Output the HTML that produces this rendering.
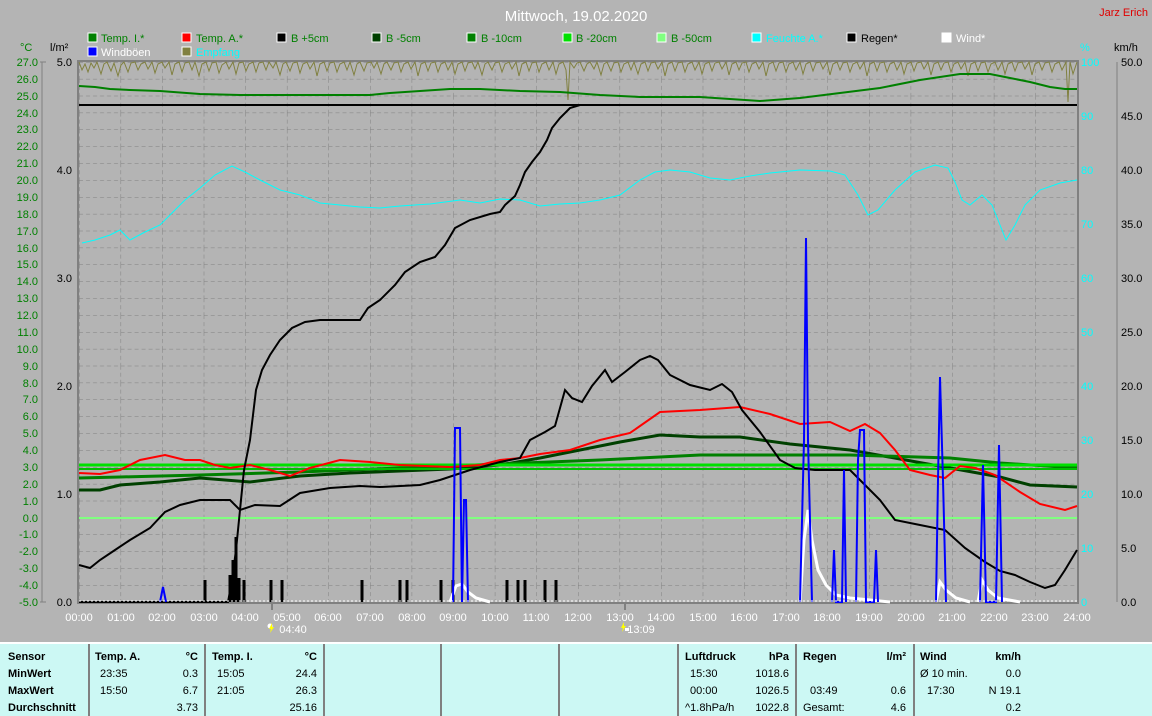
<!DOCTYPE html>
<html><head><meta charset="utf-8"><style>
body{margin:0;width:1152px;height:714px;overflow:hidden;background:#b4b4b4;font-family:"Liberation Sans",sans-serif;}
svg{position:absolute;left:0;top:0}
.tb{position:absolute;left:0;top:642px;width:1152px;height:72px;background:#ccf8f4;border-top:2px solid #fff;}
.tb div{position:absolute;font-size:11px;color:#000;white-space:nowrap}
.b{font-weight:bold}
.r{text-align:right}
.sep{position:absolute;top:0;width:2px;height:72px;background:#808080!important}
</style></head><body>
<svg width="1152" height="714" font-family="Liberation Sans, sans-serif">
<defs>
<pattern id="g" x="79" y="62" width="41.583" height="16.875" patternUnits="userSpaceOnUse">
<line x1="0" y1="0" x2="41.583" y2="0" stroke="#808080" stroke-dasharray="4,3"/>
<line x1="0" y1="0" x2="0" y2="16.875" stroke="#808080" stroke-dasharray="4,3"/>
</pattern>
</defs>
<text x="576" y="21" fill="#fff" font-size="15" text-anchor="middle">Mittwoch, 19.02.2020</text>
<text x="1148" y="16" fill="#e00000" font-size="11" text-anchor="end">Jarz Erich</text>
<g font-size="11">
<rect x="88" y="33" width="9" height="9" fill="#008000" stroke="#fff"/><text x="101" y="42" fill="#008000">Temp. I.*</text>
<rect x="182" y="33" width="9" height="9" fill="#ff0000" stroke="#fff"/><text x="196" y="42" fill="#008000">Temp. A.*</text>
<rect x="277" y="33" width="9" height="9" fill="#000" stroke="#fff"/><text x="291" y="42" fill="#008000">B +5cm</text>
<rect x="372" y="33" width="9" height="9" fill="#004000" stroke="#fff"/><text x="386" y="42" fill="#008000">B -5cm</text>
<rect x="467" y="33" width="9" height="9" fill="#008000" stroke="#fff"/><text x="481" y="42" fill="#008000">B -10cm</text>
<rect x="563" y="33" width="9" height="9" fill="#00e000" stroke="#fff"/><text x="576" y="42" fill="#008000">B -20cm</text>
<rect x="657" y="33" width="9" height="9" fill="#80ff80" stroke="#fff"/><text x="671" y="42" fill="#008000">B -50cm</text>
<rect x="752" y="33" width="9" height="9" fill="#00ffff" stroke="#fff"/><text x="766" y="42" fill="#00ffff">Feuchte A.*</text>
<rect x="847" y="33" width="9" height="9" fill="#000" stroke="#fff"/><text x="861" y="42" fill="#000">Regen*</text>
<rect x="942" y="33" width="9" height="9" fill="#fff" stroke="#fff"/><text x="956" y="42" fill="#fff">Wind*</text>
<rect x="88" y="47" width="9" height="9" fill="#0000ff" stroke="#fff"/><text x="101" y="56" fill="#fff">Windböen</text>
<rect x="182" y="47" width="9" height="9" fill="#808040" stroke="#fff"/><text x="196" y="56" fill="#00ffff">Empfang</text>
<text x="20" y="51" fill="#008000">°C</text>
<text x="50" y="51" fill="#000">l/m²</text>
<text x="1080" y="51" fill="#00ffff">%</text>
<text x="1114" y="51" fill="#000">km/h</text>
</g>
<g font-size="11" fill="#008000" text-anchor="end">
<text x="38" y="66">27.0</text><text x="38" y="83">26.0</text><text x="38" y="100">25.0</text><text x="38" y="117">24.0</text><text x="38" y="133">23.0</text><text x="38" y="150">22.0</text><text x="38" y="167">21.0</text><text x="38" y="184">20.0</text><text x="38" y="201">19.0</text><text x="38" y="218">18.0</text><text x="38" y="235">17.0</text><text x="38" y="252">16.0</text><text x="38" y="268">15.0</text><text x="38" y="285">14.0</text><text x="38" y="302">13.0</text><text x="38" y="319">12.0</text><text x="38" y="336">11.0</text><text x="38" y="353">10.0</text><text x="38" y="370">9.0</text><text x="38" y="387">8.0</text><text x="38" y="403">7.0</text><text x="38" y="420">6.0</text><text x="38" y="437">5.0</text><text x="38" y="454">4.0</text><text x="38" y="471">3.0</text><text x="38" y="488">2.0</text><text x="38" y="505">1.0</text><text x="38" y="522">0.0</text><text x="38" y="538">-1.0</text><text x="38" y="555">-2.0</text><text x="38" y="572">-3.0</text><text x="38" y="589">-4.0</text><text x="38" y="606">-5.0</text>
</g>
<line x1="42" y1="62" x2="42" y2="602" stroke="#808080"/>
<g stroke="#808080"><line x1="40" y1="62" x2="46" y2="62"/><line x1="40" y1="602" x2="46" y2="602"/></g>
<g font-size="11" fill="#000" text-anchor="end">
<text x="72" y="66">5.0</text><text x="72" y="174">4.0</text><text x="72" y="282">3.0</text><text x="72" y="390">2.0</text><text x="72" y="498">1.0</text><text x="72" y="606">0.0</text>
</g>
<g font-size="11" fill="#00ffff">
<text x="1081" y="66">100</text><text x="1081" y="120">90</text><text x="1081" y="174">80</text><text x="1081" y="228">70</text><text x="1081" y="282">60</text><text x="1081" y="336">50</text><text x="1081" y="390">40</text><text x="1081" y="444">30</text><text x="1081" y="498">20</text><text x="1081" y="552">10</text><text x="1081" y="606">0</text>
</g>
<line x1="1117" y1="62" x2="1117" y2="602" stroke="#808080"/>
<g font-size="11" fill="#000">
<text x="1121" y="66">50.0</text><text x="1121" y="120">45.0</text><text x="1121" y="174">40.0</text><text x="1121" y="228">35.0</text><text x="1121" y="282">30.0</text><text x="1121" y="336">25.0</text><text x="1121" y="390">20.0</text><text x="1121" y="444">15.0</text><text x="1121" y="498">10.0</text><text x="1121" y="552">5.0</text><text x="1121" y="606">0.0</text>
</g>
<rect x="79" y="62" width="998" height="540" fill="url(#g)"/>
<rect x="78" y="61" width="1000" height="542" fill="none" stroke="#808080" stroke-width="2"/>
<polyline fill="none" stroke="#808040" stroke-width="1" points="79,62 82,70 85,64 88,72 91,63 94,68 97,62 101,74 104,64 107,62 111,71 114,63 118,76 121,65 124,62 128,72 131,63 135,62 138,70 141,64 145,62 148,69 152,62 155,73 158,64 162,62 165,68 169,62 172,75 175,64 179,62 182,72 185,63 189,62 192,70 195,62 199,76 202,64 206,62 209,71 212,63 216,62 219,73 222,65 226,62 229,69 233,62 236,74 239,63 243,62 246,71 249,64 253,62 256,72 259,63 263,62 266,70 269,62 273,68 276,62 280,75 283,64 286,62 290,71 293,63 297,62 300,73 303,64 307,62 310,69 314,62 317,76 320,64 324,62 327,71 330,63 334,62 337,72 340,64 344,62 347,70 350,62 354,75 357,64 360,62 364,71 367,63 371,62 374,68 377,62 381,74 384,64 387,62 391,70 394,63 398,62 401,72 404,64 408,62 411,69 415,62 418,76 421,64 425,62 428,71 431,63 435,62 438,72 441,64 445,62 448,70 452,62 455,74 458,64 462,62 465,71 468,63 472,62 475,69 478,62 482,75 485,64 488,62 492,70 495,63 499,62 502,72 505,64 509,62 512,69 516,62 519,76 522,64 526,62 529,71 532,63 536,62 539,72 542,64 546,62 549,70 553,62 556,74 559,64 563,62 566,70 568,100 570,62 574,68 577,63 580,62 584,71 587,64 590,62 594,69 597,62 601,75 604,64 607,62 611,71 614,63 618,62 621,72 624,64 628,62 631,70 634,62 638,74 641,64 645,62 648,71 651,63 655,62 658,69 662,62 665,76 668,64 672,62 675,71 678,63 682,62 685,72 688,64 692,62 695,70 699,62 702,74 705,64 709,62 712,71 715,63 719,62 722,69 726,62 729,75 732,64 736,62 739,70 742,63 746,62 749,72 752,64 756,62 759,69 763,62 766,76 769,64 773,62 776,71 779,63 783,62 786,72 789,64 793,62 796,70 800,62 803,74 806,64 810,62 813,71 816,63 820,62 823,69 827,62 830,75 833,64 837,62 840,70 843,63 847,62 850,72 853,64 857,62 860,69 864,62 867,76 870,64 874,62 877,71 880,63 884,62 887,72 890,64 894,62 897,70 901,62 904,74 907,64 911,62 914,71 917,63 921,62 924,69 928,62 931,75 934,64 938,62 941,70 944,63 948,62 951,72 954,64 958,62 961,69 965,62 968,76 971,64 975,62 978,71 981,63 985,62 988,72 991,64 995,62 998,70 1002,62 1005,74 1008,64 1012,62 1015,71 1018,63 1022,62 1025,69 1029,62 1032,75 1035,64 1039,62 1042,70 1045,63 1049,62 1052,72 1055,64 1059,62 1062,70 1066,62 1068,102 1070,62 1073,74 1077,62"/>
<polyline fill="none" stroke="#008000" stroke-width="2" points="79,86 95,87 110,89 130,90 160,91 200,94 240,95 300,95 370,95 390,93 420,91 450,89 480,89 520,91 560,92 600,95 640,97 700,97 760,101 800,98 840,93 880,88 920,80 960,74 990,74 1010,78 1030,82 1050,87 1065,89 1077,89"/>
<polyline fill="none" stroke="#000" stroke-width="2" points="79,105 1077,105"/>
<line x1="79" y1="518" x2="1077" y2="518" stroke="#80ff80" stroke-width="2"/>
<polyline fill="none" stroke="#00ffff" stroke-width="1" points="82,243 95,240 110,235 120,230 130,240 145,232 160,225 175,210 185,200 200,188 215,175 232,166 245,172 260,180 280,190 300,195 320,203 340,205 360,207 380,208 400,206 430,204 460,200 480,203 500,199 520,200 540,206 560,204 580,203 600,200 620,195 640,180 655,172 670,170 690,172 710,178 730,180 750,176 770,173 800,170 830,171 845,175 858,195 868,215 878,210 895,190 915,172 935,165 948,168 955,182 962,200 970,205 982,195 992,205 1000,225 1006,240 1015,225 1025,205 1040,190 1060,183 1077,180"/>
<polyline fill="none" stroke="#004000" stroke-width="3" points="79,490 100,490 120,485 160,482 200,478 250,482 300,476 350,473 400,471 450,469 500,465 540,458 580,450 620,442 660,435 700,437 740,437 790,444 850,450 900,459 950,468 1000,477 1030,485 1077,487"/>
<polyline fill="none" stroke="#008000" stroke-width="3" points="79,478 120,477 200,475 300,472 400,468 500,464 600,460 700,455 850,455 950,458 1000,463 1077,468"/>
<line x1="79" y1="465" x2="1077" y2="465" stroke="#00e000" stroke-width="3"/>
<line x1="79" y1="469" x2="1077" y2="469" stroke="#00c000" stroke-width="2"/>
<polyline fill="none" stroke="#ff0000" stroke-width="2" points="79,473 100,474 120,470 140,460 165,455 185,460 200,460 215,465 230,468 250,465 270,470 290,476 310,468 340,460 370,462 400,465 450,467 480,465 500,460 520,458 540,454 570,450 600,440 630,433 660,412 700,410 740,407 770,414 800,424 830,422 850,431 865,424 880,433 895,450 910,470 930,475 945,478 960,466 975,468 995,475 1020,492 1040,504 1065,510 1077,506"/>
<polyline fill="none" stroke="#000" stroke-width="2" points="79,565 90,568 100,560 115,550 130,540 150,528 165,512 180,505 200,500 230,500 240,510 255,505 280,506 300,493 330,488 360,486 380,487 420,485 440,480 470,470 500,462 520,458 530,440 545,432 555,426 565,390 572,398 582,402 592,386 605,370 612,382 625,372 640,360 650,356 658,360 670,375 690,385 710,390 722,384 732,392 742,410 760,432 780,460 795,468 815,470 850,470 865,485 880,500 895,520 920,525 945,530 965,548 985,562 1000,571 1015,575 1030,582 1045,588 1055,585 1065,570 1077,550"/>
<polyline fill="none" stroke="#000" stroke-width="2" points="79,602 228,602 232,580 236,550 240,510 244,470 250,440 256,390 262,370 270,355 280,340 292,328 305,322 320,320 360,320 368,308 380,300 395,285 405,272 420,262 435,257 445,245 455,228 470,220 490,214 500,212 505,205 515,196 520,185 525,172 532,162 540,152 547,140 552,128 560,118 570,108 580,105"/>
<g stroke="#000" stroke-width="3">
<line x1="205" y1="602" x2="205" y2="580"/><line x1="230" y1="602" x2="230" y2="575"/><line x1="233" y1="602" x2="233" y2="560"/><line x1="236" y1="602" x2="236" y2="537"/><line x1="239" y1="602" x2="239" y2="578"/><line x1="244" y1="602" x2="244" y2="580"/><line x1="271" y1="602" x2="271" y2="580"/><line x1="282" y1="602" x2="282" y2="580"/><line x1="362" y1="602" x2="362" y2="580"/><line x1="400" y1="602" x2="400" y2="580"/><line x1="407" y1="602" x2="407" y2="580"/><line x1="441" y1="602" x2="441" y2="580"/><line x1="453" y1="602" x2="453" y2="580"/><line x1="507" y1="602" x2="507" y2="580"/><line x1="518" y1="602" x2="518" y2="580"/><line x1="525" y1="602" x2="525" y2="580"/><line x1="545" y1="602" x2="545" y2="580"/><line x1="556" y1="602" x2="556" y2="580"/>
</g>
<g fill="none" stroke="#fff" stroke-width="3">
<polyline points="450,602 456,586 462,584 468,592 476,598 490,602"/>
<polyline points="800,602 804,540 808,510 812,540 818,570 826,585 836,595 850,598 870,600 890,602"/>
<polyline points="936,602 940,582 946,590 956,598 970,602"/>
<polyline points="978,602 982,580 988,590 998,598 1020,602"/>
</g>
<g fill="none" stroke="#0000ff" stroke-width="2">
<polyline points="160,602 163,587 166,602"/>
<polyline points="453,602 455,428 460,428 462,602 464,500 466,500 468,602"/>
<polyline points="800,602 804,440 806,238 808,440 812,602"/>
<polyline points="832,602 834,550 836,602 842,602 844,470 846,602"/>
<polyline points="856,602 858,460 860,430 864,430 866,602 874,602 876,550 878,602"/>
<polyline points="936,602 938,480 940,377 943,480 946,602"/>
<polyline points="980,602 983,465 986,602 996,602 999,445 1002,602"/>
</g>
<line x1="79" y1="601" x2="1077" y2="601" stroke="#fff" stroke-dasharray="2,2"/>
<g font-size="11" fill="#fff" text-anchor="middle">
<text x="79" y="621">00:00</text><text x="121" y="621">01:00</text><text x="162" y="621">02:00</text><text x="204" y="621">03:00</text><text x="245" y="621">04:00</text><text x="287" y="621">05:00</text><text x="328" y="621">06:00</text><text x="370" y="621">07:00</text><text x="412" y="621">08:00</text><text x="453" y="621">09:00</text><text x="495" y="621">10:00</text><text x="536" y="621">11:00</text><text x="578" y="621">12:00</text><text x="620" y="621">13:00</text><text x="661" y="621">14:00</text><text x="703" y="621">15:00</text><text x="744" y="621">16:00</text><text x="786" y="621">17:00</text><text x="827" y="621">18:00</text><text x="869" y="621">19:00</text><text x="911" y="621">20:00</text><text x="952" y="621">21:00</text><text x="994" y="621">22:00</text><text x="1035" y="621">23:00</text><text x="1077" y="621">24:00</text>
<text x="293" y="633">04:40</text><text x="641" y="633">13:09</text>
</g>
<line x1="272" y1="602" x2="272" y2="610" stroke="#808080" stroke-width="2"/>
<line x1="625" y1="602" x2="625" y2="610" stroke="#808080" stroke-width="2"/>
<circle cx="270" cy="626" r="2.5" fill="#fff"/><path d="M272 623 l-3 6 h2 l-1 4 l4 -6 h-2 z" fill="#ffff00"/>
<path d="M624 622 l-3 6 h2 l-1 4 l4 -6 h-2 z" fill="#ffff00"/><rect x="625" y="628" width="4" height="3" fill="#fff"/>
</svg>
<div class="tb">
<div class="sep" style="left:88px"></div><div class="sep" style="left:204px"></div><div class="sep" style="left:323px"></div><div class="sep" style="left:440px"></div><div class="sep" style="left:558px"></div><div class="sep" style="left:677px"></div><div class="sep" style="left:795px"></div><div class="sep" style="left:913px"></div>
<div class="b" style="left:8px;top:7px">Sensor</div>
<div class="b" style="left:8px;top:24px">MinWert</div>
<div class="b" style="left:8px;top:41px">MaxWert</div>
<div class="b" style="left:8px;top:58px">Durchschnitt</div>
<div class="b" style="left:95px;top:7px">Temp. A.</div><div class="b r" style="left:150px;width:48px;top:7px">°C</div>
<div style="left:100px;top:24px">23:35</div><div class="r" style="left:150px;width:48px;top:24px">0.3</div>
<div style="left:100px;top:41px">15:50</div><div class="r" style="left:150px;width:48px;top:41px">6.7</div>
<div class="r" style="left:150px;width:48px;top:58px">3.73</div>
<div class="b" style="left:212px;top:7px">Temp. I.</div><div class="b r" style="left:270px;width:47px;top:7px">°C</div>
<div style="left:217px;top:24px">15:05</div><div class="r" style="left:270px;width:47px;top:24px">24.4</div>
<div style="left:217px;top:41px">21:05</div><div class="r" style="left:270px;width:47px;top:41px">26.3</div>
<div class="r" style="left:270px;width:47px;top:58px">25.16</div>
<div class="b" style="left:685px;top:7px">Luftdruck</div><div class="b r" style="left:740px;width:49px;top:7px">hPa</div>
<div style="left:690px;top:24px">15:30</div><div class="r" style="left:740px;width:49px;top:24px">1018.6</div>
<div style="left:690px;top:41px">00:00</div><div class="r" style="left:740px;width:49px;top:41px">1026.5</div>
<div style="left:685px;top:58px">^1.8hPa/h</div><div class="r" style="left:740px;width:49px;top:58px">1022.8</div>
<div class="b" style="left:803px;top:7px">Regen</div><div class="b r" style="left:860px;width:46px;top:7px">l/m²</div>
<div style="left:810px;top:41px">03:49</div><div class="r" style="left:860px;width:46px;top:41px">0.6</div>
<div style="left:803px;top:58px">Gesamt:</div><div class="r" style="left:860px;width:46px;top:58px">4.6</div>
<div class="b" style="left:920px;top:7px">Wind</div><div class="b r" style="left:970px;width:51px;top:7px">km/h</div>
<div style="left:920px;top:24px">Ø 10 min.</div><div class="r" style="left:970px;width:51px;top:24px">0.0</div>
<div style="left:927px;top:41px">17:30</div><div class="r" style="left:970px;width:51px;top:41px">N 19.1</div>
<div class="r" style="left:970px;width:51px;top:58px">0.2</div>
</div>
</body></html>
